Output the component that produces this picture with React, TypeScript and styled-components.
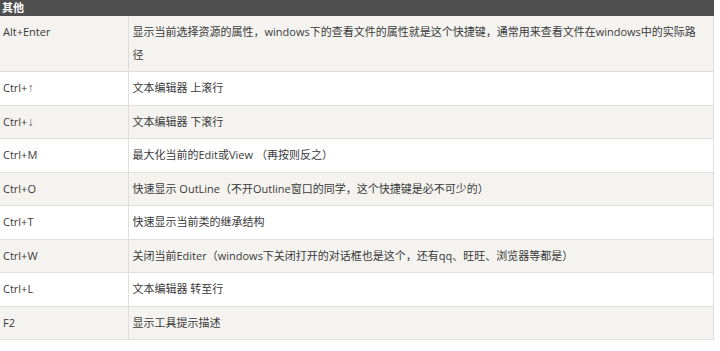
import React from "react";
import styled, { createGlobalStyle } from "styled-components";

const GlobalStyle = createGlobalStyle`
  html,
  body {
    margin: 0;
    padding: 0;
    background-color: #ffffff;
  }
`;

const fontStack = `"Open Sans", "Noto Sans CJK SC", "Liberation Sans", sans-serif`;

const ShortcutTable = styled.table`
  width: 714px;
  border-collapse: collapse;
  table-layout: fixed;
  font-family: ${fontStack};
  font-size: 11px;
  color: #3a3a3a;
`;

const KeyColumn = styled.col`
  width: 128px;
`;

const HeadCell = styled.th`
  height: 16px;
  padding: 0 2px;
  background-color: #4f4f4f;
  color: #ffffff;
  font-weight: bold;
  font-size: 11px;
  line-height: 16px;
  text-align: left;
`;

const Row = styled.tr<{ $shaded: boolean }>`
  background-color: ${(props) => (props.$shaded ? "#f4f3ef" : "#ffffff")};
`;

const KeyCell = styled.td`
  padding: 5px 3px;
  line-height: 22.5px;
  vertical-align: top;
  border-bottom: 1px solid #dedede;
  border-right: 1px solid #dedede;
`;

const Arrow = styled.span`
  font-family: "Liberation Sans", sans-serif;
  font-size: 12px;
  color: #555555;
`;

const DescCell = styled.td`
  padding: 5px 8px 5px 4px;
  line-height: 22.5px;
  vertical-align: top;
  border-bottom: 1px solid #dedede;
  border-right: 1px solid #dedede;
  word-break: break-all;
`;

const shortcuts: { key: React.ReactNode; id: string; desc: string }[] = [
  {
    id: "alt-enter",
    key: "Alt+Enter",
    desc: "显示当前选择资源的属性，windows下的查看文件的属性就是这个快捷键，通常用来查看文件在windows中的实际路径",
  },
  { id: "up", key: <>Ctrl+<Arrow>↑</Arrow></>, desc: "文本编辑器 上滚行" },
  { id: "down", key: <>Ctrl+<Arrow>↓</Arrow></>, desc: "文本编辑器 下滚行" },
  { id: "m", key: "Ctrl+M", desc: "最大化当前的Edit或View （再按则反之）" },
  {
    id: "o",
    key: "Ctrl+O",
    desc: "快速显示 OutLine（不开Outline窗口的同学，这个快捷键是必不可少的）",
  },
  { id: "t", key: "Ctrl+T", desc: "快速显示当前类的继承结构" },
  {
    id: "w",
    key: "Ctrl+W",
    desc: "关闭当前Editer（windows下关闭打开的对话框也是这个，还有qq、旺旺、浏览器等都是）",
  },
  { id: "l", key: "Ctrl+L", desc: "文本编辑器 转至行" },
  { id: "f2", key: "F2", desc: "显示工具提示描述" },
];

export default function App() {
  return (
    <>
      <GlobalStyle />
      <ShortcutTable>
        <colgroup>
          <KeyColumn />
          <col />
        </colgroup>
        <thead>
          <tr>
            <HeadCell colSpan={2}>其他</HeadCell>
          </tr>
        </thead>
        <tbody>
          {shortcuts.map((item, i) => (
            <Row key={item.id} $shaded={i % 2 === 0}>
              <KeyCell>{item.key}</KeyCell>
              <DescCell>{item.desc}</DescCell>
            </Row>
          ))}
        </tbody>
      </ShortcutTable>
    </>
  );
}
